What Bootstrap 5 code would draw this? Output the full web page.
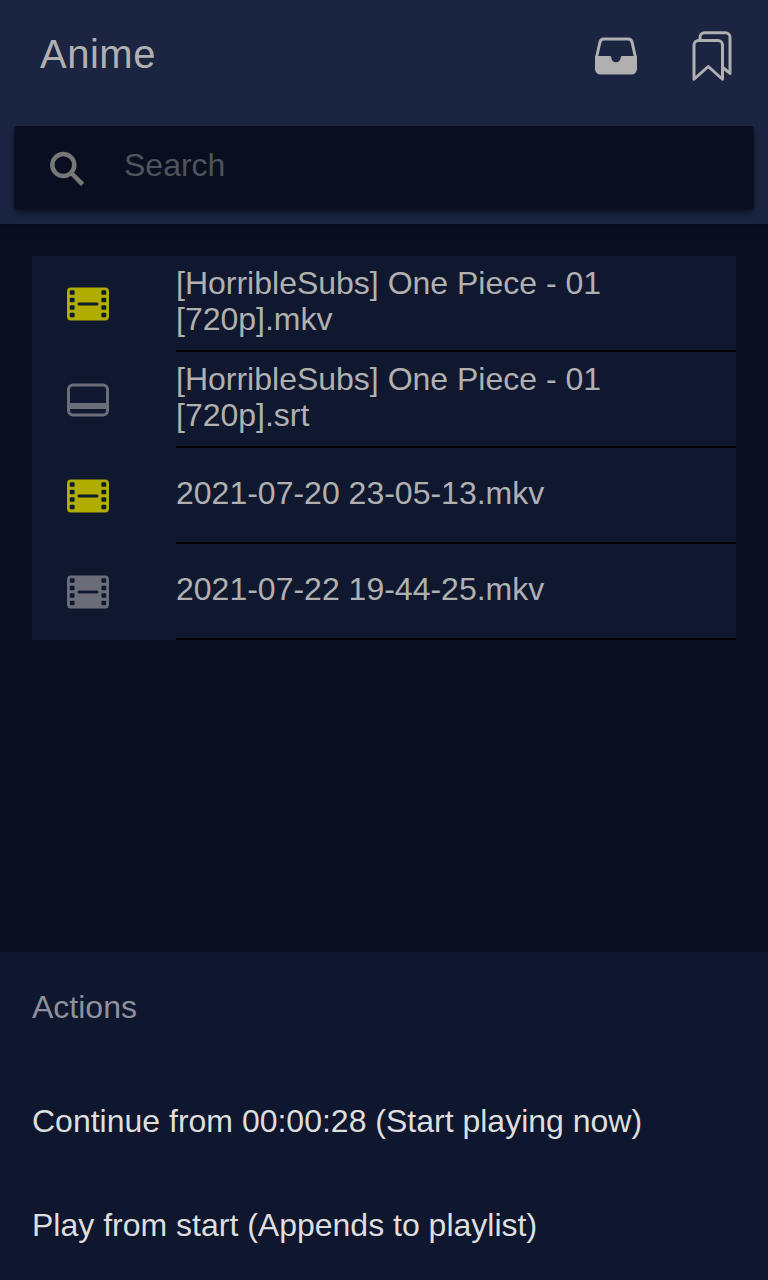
<!DOCTYPE html>
<html lang="en" data-bs-theme="dark">
<head>
<meta charset="utf-8">
<meta name="viewport" content="width=device-width, initial-scale=1">
<title>Anime</title>
<link rel="stylesheet" href="https://cdn.jsdelivr.net/npm/bootstrap@5.3.0/dist/css/bootstrap.min.css">
<style>
body { font-family: "Liberation Sans", Arial, sans-serif; font-size: 32px; line-height: 36px; background: #090f20; color: #b0b0b0; }
svg { display: block; flex: none; }
.app-header { background: #1b2441; box-shadow: 0 4px 10px rgba(0,0,0,.2); }
.app-bar { height: 112px; padding: 0 32px 0 40px; }
.app-title { font-size: 40px; line-height: 48px; letter-spacing: .5px; padding-bottom: 4px; color: #b0b0b0; }
.bar-actions { gap: 48px; }
.search-box { height: 84px; margin: 14px; padding: 0 32px; border-radius: 4px; background: #090f20; box-shadow: 0 4px 4px -2px rgba(0,0,0,.2), 0 4px 4px rgba(0,0,0,.14), 0 2px 10px rgba(0,0,0,.12); }
.search-box .form-control, .search-box .form-control:focus { font-size: 32px; line-height: 36px; background: none; box-shadow: none; margin-left: 36px; padding: 0 0 6px; color: #b0b0b0; }
.search-box .form-control::placeholder { color: #50535d; opacity: 1; }
.file-list { margin: 32px; background: #101830; }
.file-row { height: 96px; padding-left: 32px; }
.file-row svg { margin-right: 64px; }
.file-name { border-bottom: 2px solid #000; padding: 0 64px 4px 0; }
.film-watched { color: #afae00; }
.film-plain { color: #6b6e79; }
.action-sheet { height: 328px; background: #0f172f; color: #dedede; }
.sheet-title { color: #8e919c; padding: 37px 32px 46px; }
.sheet-action { height: 104px; padding: 0 32px 4px; background: none; color: inherit; }
</style>
</head>
<body class="vh-100 d-flex flex-column overflow-hidden">
<svg width="0" height="0" class="position-absolute">
  <defs>
    <symbol id="film" viewBox="0 0 48 48">
      <path fill="currentColor" fill-rule="evenodd" d="M7 7.500H41A4 4 0 0 1 45 11.500V36.500A4 4 0 0 1 41 40.500H7A4 4 0 0 1 3 36.500V11.500A4 4 0 0 1 7 7.500Z
      M6.800 10.200a1 1 0 0 0-1 1v2.600a1 1 0 0 0 1 1h2.800a1 1 0 0 0 1-1v-2.600a1 1 0 0 0-1-1z
      m0 7.500a1 1 0 0 0-1 1v2.600a1 1 0 0 0 1 1h2.800a1 1 0 0 0 1-1v-2.600a1 1 0 0 0-1-1z
      m0 7.500a1 1 0 0 0-1 1v2.600a1 1 0 0 0 1 1h2.800a1 1 0 0 0 1-1v-2.600a1 1 0 0 0-1-1z
      m0 7.500a1 1 0 0 0-1 1v2.600a1 1 0 0 0 1 1h2.800a1 1 0 0 0 1-1v-2.600a1 1 0 0 0-1-1z
      M38.400 10.200a1 1 0 0 0-1 1v2.600a1 1 0 0 0 1 1h2.800a1 1 0 0 0 1-1v-2.600a1 1 0 0 0-1-1z
      m0 7.500a1 1 0 0 0-1 1v2.600a1 1 0 0 0 1 1h2.800a1 1 0 0 0 1-1v-2.600a1 1 0 0 0-1-1z
      m0 7.500a1 1 0 0 0-1 1v2.600a1 1 0 0 0 1 1h2.800a1 1 0 0 0 1-1v-2.600a1 1 0 0 0-1-1z
      m0 7.500a1 1 0 0 0-1 1v2.600a1 1 0 0 0 1 1h2.800a1 1 0 0 0 1-1v-2.600a1 1 0 0 0-1-1z
      M15 22.500a1.500 1.500 0 0 0 0 3h18a1.500 1.500 0 0 0 0-3z"/>
    </symbol>
  </defs>
</svg>

<header class="app-header">
  <div class="app-bar d-flex align-items-center justify-content-between">
    <h1 class="app-title fw-normal m-0">Anime</h1>
    <div class="bar-actions d-flex">
      <svg width="48" height="48" viewBox="0 0 48 48">
        <path fill="none" stroke="currentColor" stroke-width="3" d="M4.600 25L8 10Q8.800 7 11.800 7H36.200Q39.200 7 40 10L43.400 25"/>
        <path fill="currentColor" d="M3.200 24H18Q19.300 24 19.300 25.600A4.700 4.700 0 0 0 28.700 25.600Q28.700 24 30 24H44.800L45 26V37A5.500 5.500 0 0 1 39.500 42.500H8.500A5.500 5.500 0 0 1 3 37V26Z"/>
      </svg>
      <svg width="48" height="48" viewBox="0 0 512 512" overflow="visible" fill="none" stroke="currentColor" stroke-width="32" stroke-linejoin="round" stroke-linecap="round">
        <path d="M128 80V56a48 48 0 0 1 48-48h224a48 48 0 0 1 48 48v386l-80-66"/>
        <path d="M320 90H112a48 48 0 0 0-48 48v366l152-136 152 136V138a48 48 0 0 0-48-48z"/>
      </svg>
    </div>
  </div>
  <div class="search-box d-flex align-items-center">
    <svg width="42" height="42" viewBox="0 0 42 42" fill="none" stroke="#777777" stroke-width="4.500">
      <circle cx="17.300" cy="18" r="11"/><path d="M25.300 26L36.600 37.300"/>
    </svg>
    <input class="form-control border-0" type="text" placeholder="Search" aria-label="Search">
  </div>
</header>

<main class="flex-grow-1">
  <div class="file-list">
    <div class="file-row d-flex align-items-center">
      <svg class="film-watched" width="48" height="48"><use href="#film"/></svg>
      <div class="file-name flex-grow-1 h-100 d-flex align-items-center">[HorribleSubs] One Piece - 01 [720p].mkv</div>
    </div>
    <div class="file-row d-flex align-items-center">
      <svg width="48" height="48" viewBox="0 0 48 48">
        <rect x="4.500" y="9" width="39" height="30" rx="4.500" fill="none" stroke="#6b6e79" stroke-width="3"/>
        <path fill="#6b6e79" d="M4.500 27h39v6h-39z"/>
      </svg>
      <div class="file-name flex-grow-1 h-100 d-flex align-items-center">[HorribleSubs] One Piece - 01 [720p].srt</div>
    </div>
    <div class="file-row d-flex align-items-center">
      <svg class="film-watched" width="48" height="48"><use href="#film"/></svg>
      <div class="file-name flex-grow-1 h-100 d-flex align-items-center">2021-07-20 23-05-13.mkv</div>
    </div>
    <div class="file-row d-flex align-items-center">
      <svg class="film-plain" width="48" height="48"><use href="#film"/></svg>
      <div class="file-name flex-grow-1 h-100 d-flex align-items-center">2021-07-22 19-44-25.mkv</div>
    </div>
  </div>
</main>

<section class="action-sheet d-flex flex-column flex-shrink-0">
  <div class="sheet-title">Actions</div>
  <button class="sheet-action border-0 text-start flex-shrink-0">Continue from 00:00:28 (Start playing now)</button>
  <button class="sheet-action border-0 text-start flex-shrink-0">Play from start (Appends to playlist)</button>
</section>
<script src="https://cdn.jsdelivr.net/npm/bootstrap@5.3.0/dist/js/bootstrap.bundle.min.js"></script>
</body>
</html>
